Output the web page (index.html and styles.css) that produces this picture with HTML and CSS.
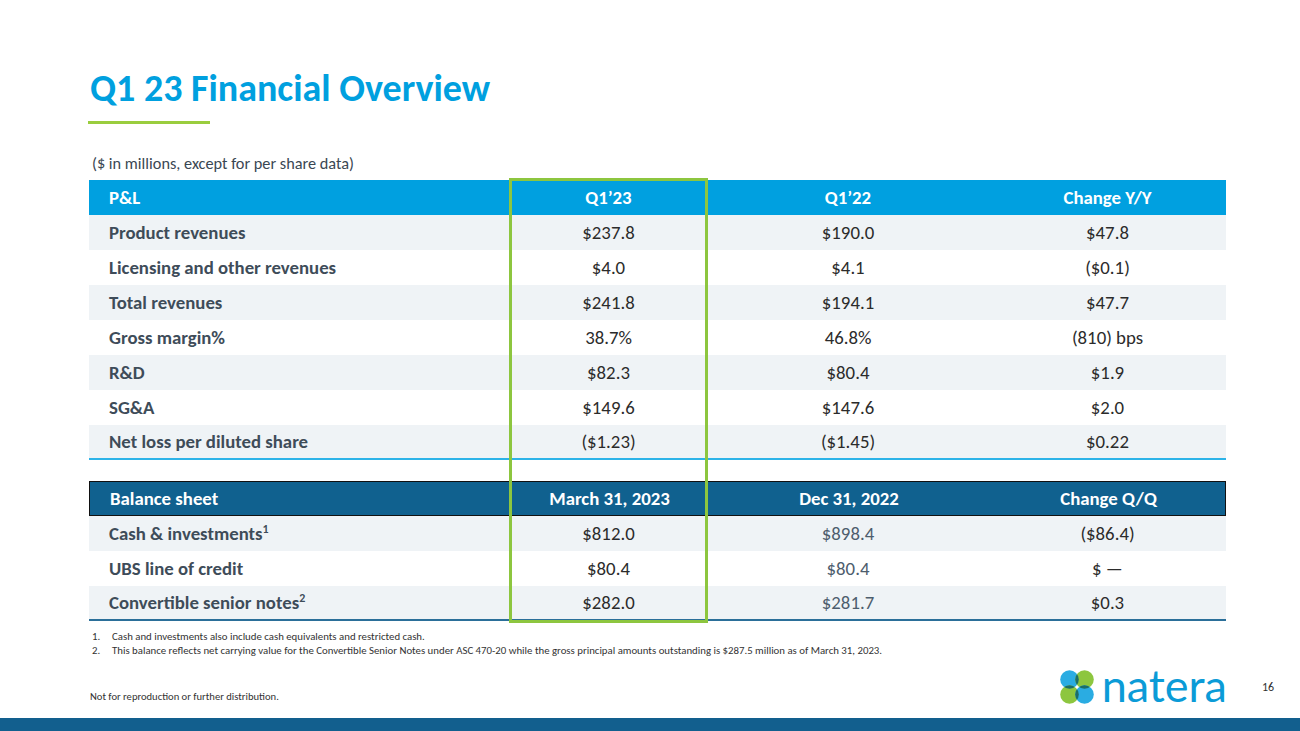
FILE: index.html
```html
<!DOCTYPE html>
<html>
<head>
<meta charset="utf-8">
<link rel="stylesheet" href="styles.css">
</head>
<body>
<div class="slide">
  <h1 class="title">Q1 23 Financial Overview</h1>
  <div class="rule"></div>
  <p class="subtitle">($ in millions, except for per share data)</p>

  <div class="tables">
    <div class="grid pl">
      <div class="row head">
        <div class="c lab">P&amp;L</div><div class="c">Q1’23</div><div class="c">Q1’22</div><div class="c">Change Y/Y</div>
      </div>
      <div class="row alt">
        <div class="c lab">Product revenues</div><div class="c">$237.8</div><div class="c">$190.0</div><div class="c">$47.8</div>
      </div>
      <div class="row">
        <div class="c lab">Licensing and other revenues</div><div class="c">$4.0</div><div class="c">$4.1</div><div class="c">($0.1)</div>
      </div>
      <div class="row alt">
        <div class="c lab">Total revenues</div><div class="c">$241.8</div><div class="c">$194.1</div><div class="c">$47.7</div>
      </div>
      <div class="row">
        <div class="c lab">Gross margin%</div><div class="c">38.7%</div><div class="c">46.8%</div><div class="c">(810) bps</div>
      </div>
      <div class="row alt">
        <div class="c lab">R&amp;D</div><div class="c">$82.3</div><div class="c">$80.4</div><div class="c">$1.9</div>
      </div>
      <div class="row">
        <div class="c lab">SG&amp;A</div><div class="c">$149.6</div><div class="c">$147.6</div><div class="c">$2.0</div>
      </div>
      <div class="row alt last-pl">
        <div class="c lab">Net loss per diluted share</div><div class="c">($1.23)</div><div class="c">($1.45)</div><div class="c">$0.22</div>
      </div>
    </div>

    <div class="grid bs">
      <div class="row head dark">
        <div class="c lab">Balance sheet</div><div class="c">March 31, 2023</div><div class="c">Dec 31, 2022</div><div class="c">Change Q/Q</div>
      </div>
      <div class="row alt">
        <div class="c lab">Cash &amp; investments<sup>1</sup></div><div class="c">$812.0</div><div class="c muted">$898.4</div><div class="c">($86.4)</div>
      </div>
      <div class="row">
        <div class="c lab">UBS line of credit</div><div class="c">$80.4</div><div class="c muted">$80.4</div><div class="c">$ —</div>
      </div>
      <div class="row alt last-bs">
        <div class="c lab">Convertible senior notes<sup>2</sup></div><div class="c">$282.0</div><div class="c muted">$281.7</div><div class="c">$0.3</div>
      </div>
    </div>

    <div class="highlight"></div>
  </div>

  <ol class="notes">
    <li>Cash and investments also include cash equivalents and restricted cash.</li>
    <li>This balance reflects net carrying value for the Convertible Senior Notes under ASC 470-20 while the gross principal amounts outstanding is $287.5 million as of March 31, 2023.</li>
  </ol>

  <div class="footer">
    <span class="disclaimer">Not for reproduction or further distribution.</span>
    <div class="brand">
      <svg class="mark" width="36" height="36" viewBox="0 0 36 36">
        <defs>
          <clipPath id="tl"><circle cx="10.5" cy="10.5" r="9.3"/></clipPath>
          <clipPath id="br"><circle cx="25.5" cy="25.5" r="9.3"/></clipPath>
        </defs>
        <circle cx="10.5" cy="10.5" r="9.3" fill="#2aace2"/>
        <circle cx="25.5" cy="10.5" r="9.3" fill="#8dc63f"/>
        <circle cx="10.5" cy="25.5" r="9.3" fill="#8dc63f"/>
        <circle cx="25.5" cy="25.5" r="9.3" fill="#2aace2"/>
        <g fill="#1c6e68">
          <circle cx="25.5" cy="10.5" r="9.3" clip-path="url(#tl)"/>
          <circle cx="10.5" cy="25.5" r="9.3" clip-path="url(#tl)"/>
          <circle cx="25.5" cy="10.5" r="9.3" clip-path="url(#br)"/>
          <circle cx="10.5" cy="25.5" r="9.3" clip-path="url(#br)"/>
        </g>
        <circle cx="18" cy="18" r="1.2" fill="#ffffff"/>
      </svg>
      <span class="word">natera</span>
    </div>
    <span class="page">16</span>
  </div>
  <div class="bar"></div>
</div>
</body>
</html>
```

FILE: styles.css
```css
* { box-sizing: border-box; }
html, body { margin: 0; padding: 0; }
body {
  width: 1300px;
  height: 731px;
  background: #ffffff;
  font-family: Carlito, Calibri, Lato, "Liberation Sans", sans-serif;
  color: #262626;
  overflow: hidden;
}
.slide {
  width: 1300px;
  height: 731px;
  display: flex;
  flex-direction: column;
}
.slide > * { flex: none; }
.title {
  margin: 0;
  padding: 66px 0 0 90px;
  font-size: 38px;
  line-height: 44px;
  font-weight: 700;
  color: #00a0df;
}
.rule {
  margin: 11px 0 0 88px;
  width: 122px;
  height: 3px;
  background: #9acd3e;
}
.subtitle {
  margin: 30px 0 0 92px;
  font-size: 16.3px;
  line-height: 18px;
  color: #3a4753;
}
.tables {
  position: relative;
  margin: 8px 0 0 89px;
  width: 1137px;
}
.grid .row {
  display: grid;
  grid-template-columns: 421px 197px 282px 237px;
  height: 35px;
  align-items: center;
  background: #ffffff;
}
.grid .row.alt { background: #eff3f6; }
.c {
  text-align: center;
  font-size: 18.8px;
  color: #2b2b2b;
}
.c.lab {
  text-align: left;
  padding-left: 20px;
  font-weight: 700;
  color: #3e4c59;
}
.c.muted { color: #4d5d6d; }
.row.head { background: #00a0e0; }
.row.head .c { color: #ffffff; font-weight: 700; }
.row.head.dark {
  background: #10618f;
  border: 1px solid #111;
}
.row.last-pl { border-bottom: 2px solid #2cb3e8; }
.row.last-bs { border-bottom: 2px solid #2b6f99; }
.grid.bs { margin-top: 21px; }
sup { font-size: 12px; line-height: 0; vertical-align: 7px; }
.highlight {
  position: absolute;
  left: 420px;
  top: -2px;
  width: 199px;
  height: 445px;
  border: 3px solid #8dc63f;
  pointer-events: none;
}
.notes {
  margin: 9px 0 0 92px;
  padding: 0;
  list-style: none;
  counter-reset: n;
  font-size: 10.8px;
  line-height: 14px;
  color: #333333;
}
.notes li {
  counter-increment: n;
  display: flex;
}
.notes li::before {
  content: counter(n) ".";
  width: 20px;
  flex: none;
}
.footer {
  margin-top: auto;
  display: flex;
  align-items: flex-start;
  padding-left: 90px;
  height: 60px;
}
.disclaimer {
  margin-top: 32px;
  font-size: 10.6px;
  line-height: 14px;
  color: #333333;
}
.brand {
  margin-left: auto;
  margin-top: 9px;
  display: flex;
  align-items: center;
  gap: 7px;
}
.mark { display: block; }
.word {
  font-family: Lato, "Open Sans", sans-serif;
  font-size: 45px;
  line-height: 36px;
  color: #0b9bd7;
  padding-bottom: 4px;
}
.page {
  margin-left: 35px;
  width: 38px;
  margin-top: 22px;
  font-size: 12px;
  line-height: 14px;
  color: #333333;
}
.bar {
  height: 13px;
  background: #125f8e;
}
```
